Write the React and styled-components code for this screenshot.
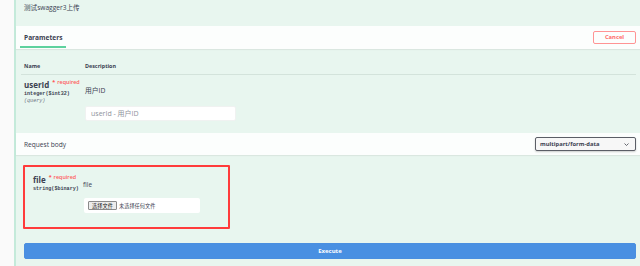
import React from 'react';
import styled, { createGlobalStyle } from 'styled-components';

const GlobalStyle = createGlobalStyle`
  html, body {
    margin: 0;
    padding: 0;
    background: #fafafa;
  }
  body {
    font-family: "Open Sans", "Noto Sans CJK SC", sans-serif;
    color: #3b4151;
  }
  #root {
    width: 640px;
    height: 266px;
    overflow: hidden;
  }
`;

const Page = styled.div`
  display: flex;
  height: 266px;
`;

const Gutter = styled.div`
  flex: none;
  width: 14px;
  background: #fafafa;
`;

const Opblock = styled.div`
  flex: 1;
  min-width: 0;
  display: flex;
  flex-direction: column;
  border-left: 2px solid #c4eada;
  background: #e8f6ef;
`;

const Summary = styled.div`
  box-sizing: border-box;
  height: 26px;
  padding: 3px 0 0 8px;
  font-size: 6.6px;
  line-height: 9px;
  color: #3b4151;
`;

const SectionHeader = styled.div`
  box-sizing: border-box;
  display: flex;
  align-items: center;
  justify-content: space-between;
  height: ${(p) => p.h || 23}px;
  padding: 0 4px 0 8px;
  background: rgba(255, 255, 255, 0.85);
  box-shadow: 0 1px 1px rgba(0, 0, 0, 0.06);
`;

const TabTitle = styled.span`
  position: relative;
  font-size: 6.6px;
  font-weight: 700;
  line-height: 9px;
  &::after {
    content: '';
    position: absolute;
    left: -10%;
    width: 120%;
    bottom: -6px;
    height: 2px;
    background: #5ed29e;
  }
`;

const HeaderLabel = styled.span`
  font-size: 6.6px;
  line-height: 9px;
  color: #3b4151;
`;

const CancelButton = styled.button`
  box-sizing: border-box;
  width: 43px;
  height: 13px;
  padding: 0;
  border: 1px solid #ff9494;
  border-radius: 2px;
  background: transparent;
  color: #ff6a6a;
  font-family: "Open Sans", sans-serif;
  font-size: 5.8px;
  font-weight: 700;
  line-height: 11px;
`;

const TableContainer = styled.div`
  padding: 0 4px 12px 5px;
`;

const Row = styled.div`
  display: grid;
  grid-template-columns: ${(p) => p.col || 61}px 1fr;
  padding-left: ${(p) => (p.flush ? 0 : 3)}px;
`;

const HeadRow = styled(Row)`
  padding-top: 13px;
  padding-bottom: 4px;
  border-bottom: 1px solid #d3e3db;
`;

const HeadCell = styled.div`
  font-size: 5.4px;
  font-weight: 700;
  line-height: 8px;
`;

const NameCell = styled.div`
  padding-top: ${(p) => p.top || 5}px;
`;

const ParamName = styled.div`
  display: flex;
  align-items: flex-start;
  font-size: 8px;
  font-weight: 700;
  line-height: 10px;
  white-space: nowrap;
`;

const Required = styled.span`
  position: relative;
  top: -1px;
  margin-left: 3px;
  color: #ff5a5a;
  font-size: 5.4px;
  font-weight: 600;
  line-height: 7px;
  & b {
    margin-right: 2px;
  }
`;

const ParamType = styled.div`
  font-family: "Liberation Mono", "DejaVu Sans Mono", monospace;
  font-size: 5.1px;
  font-weight: 700;
  line-height: 8px;
  white-space: nowrap;
`;

const ParamIn = styled.div`
  font-family: "Liberation Mono", "DejaVu Sans Mono", monospace;
  font-size: 5.1px;
  font-style: italic;
  line-height: 7px;
  color: #6b7080;
`;

const DescCell = styled.div`
  padding-top: ${(p) => p.top || 12}px;
`;

const DescText = styled.div`
  font-size: 6.8px;
  line-height: 8px;
`;

const TextInput = styled.input`
  box-sizing: border-box;
  display: block;
  width: 151px;
  height: 15px;
  margin-top: 11px;
  padding: 0 5px;
  border: 1px solid #f0f2f1;
  border-radius: 2px;
  background: #fff;
  font-family: "Open Sans", "Noto Sans CJK SC", sans-serif;
  font-size: 7px;
  outline: none;
  &::placeholder {
    color: #8e929b;
  }
`;

const Select = styled.div`
  box-sizing: border-box;
  display: flex;
  align-items: center;
  justify-content: space-between;
  width: 101px;
  height: 14px;
  padding: 0 6px 0 4px;
  border: 1px solid #5b5e66;
  border-radius: 2px;
  background: #f7f7f7;
  box-shadow: 0 1px 2px rgba(0, 0, 0, 0.2);
  font-size: 5.8px;
  font-weight: 700;
`;

const Body = styled.div`
  padding: 10px 4px 0 7px;
`;

const Highlight = styled.div`
  box-sizing: border-box;
  width: 207px;
  height: 64px;
  padding: 0 0 0 8px;
  border: 2px solid #ff3b3b;
  border-radius: 1px;
`;

const FileDesc = styled.div`
  padding-top: 14px;
  font-size: 6.4px;
  line-height: 8px;
`;

const FileBox = styled.div`
  box-sizing: border-box;
  display: flex;
  align-items: center;
  gap: 2px;
  width: 116px;
  height: 15px;
  margin-top: 9px;
  margin-left: 1px;
  padding: 0 4px;
  border-radius: 2px;
  background: #fff;
  font-size: 5.2px;
  white-space: nowrap;
`;

const FileButton = styled.span`
  box-sizing: border-box;
  display: inline-flex;
  align-items: center;
  justify-content: center;
  width: 29px;
  height: 9px;
  border: 1px solid #8a8a8a;
  border-radius: 1px;
  background: #ececec;
  color: #222;
`;

const ExecuteButton = styled.button`
  box-sizing: border-box;
  display: block;
  width: calc(100% - 1px);
  height: 16px;
  margin: 14px 0 0 1px;
  padding: 0;
  border: 1px solid #4a8fe0;
  border-radius: 2px;
  background: #4990e2;
  color: #fff;
  font-family: "Open Sans", sans-serif;
  font-size: 6px;
  font-weight: 700;
`;

const Chevron = () => (
  <svg width="5" height="3" viewBox="0 0 5 3">
    <path d="M0.5 0.5 L2.5 2.5 L4.5 0.5" fill="none" stroke="#41444e" strokeWidth="0.8" />
  </svg>
);

export default function App() {
  return (
    <>
      <GlobalStyle />
      <Page>
        <Gutter />
        <Opblock>
          <Summary>测试swagger3上传</Summary>

          <SectionHeader>
            <TabTitle>Parameters</TabTitle>
            <CancelButton>Cancel</CancelButton>
          </SectionHeader>

          <TableContainer>
            <HeadRow>
              <HeadCell>Name</HeadCell>
              <HeadCell>Description</HeadCell>
            </HeadRow>
            <Row>
              <NameCell>
                <ParamName>
                  userId
                  <Required><b>*</b>required</Required>
                </ParamName>
                <ParamType>integer($int32)</ParamType>
                <ParamIn>(query)</ParamIn>
              </NameCell>
              <DescCell>
                <DescText>用户ID</DescText>
                <TextInput placeholder="userId - 用户ID" />
              </DescCell>
            </Row>
          </TableContainer>

          <SectionHeader h={22}>
            <HeaderLabel>Request body</HeaderLabel>
            <Select>
              multipart/form-data
              <Chevron />
            </Select>
          </SectionHeader>

          <Body>
            <Highlight>
              <Row col={50} flush>
                <NameCell top={8}>
                  <ParamName>
                    file
                    <Required><b>*</b>required</Required>
                  </ParamName>
                  <ParamType>string($binary)</ParamType>
                </NameCell>
                <div>
                  <FileDesc>file</FileDesc>
                  <FileBox>
                    <FileButton>选择文件</FileButton>
                    未选择任何文件
                  </FileBox>
                </div>
              </Row>
            </Highlight>
            <ExecuteButton>Execute</ExecuteButton>
          </Body>
        </Opblock>
      </Page>
    </>
  );
}
